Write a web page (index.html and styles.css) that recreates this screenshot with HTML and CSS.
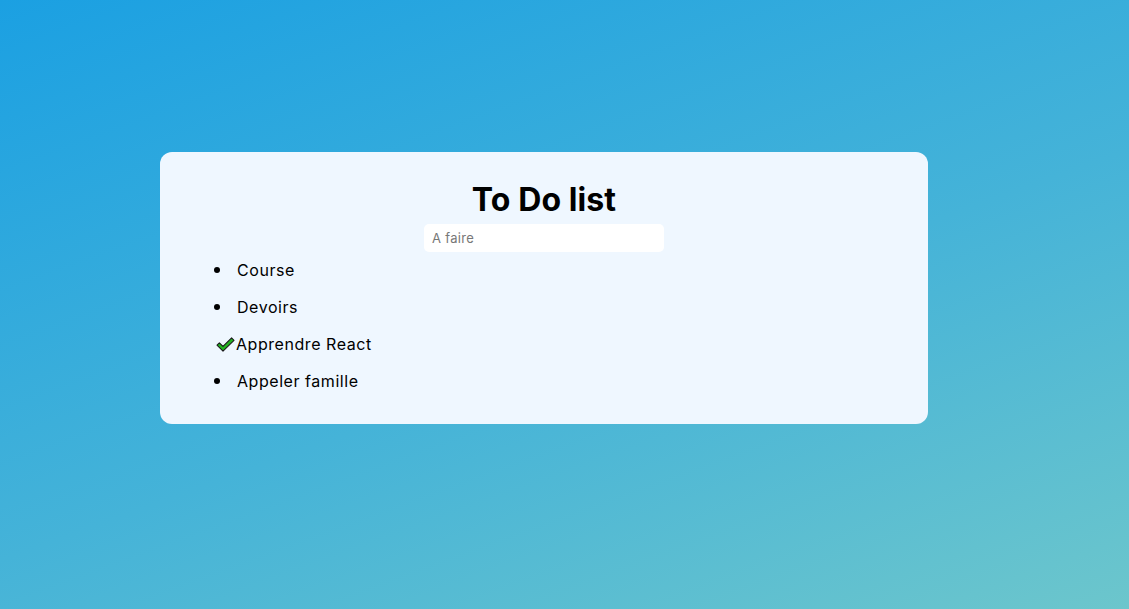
FILE: index.html
```html
<!DOCTYPE html>
<html lang="fr">
<head>
<meta charset="utf-8">
<title>To Do list</title>
<link rel="stylesheet" href="styles.css">
</head>
<body>
<main class="card">
  <h1 class="title">To Do list</h1>
  <input class="todo-input" type="text" placeholder="A faire">
  <ul class="todo-list">
    <li class="todo-item"><span class="marker"><span class="dot"></span></span><span class="label">Course</span></li>
    <li class="todo-item"><span class="marker"><span class="dot"></span></span><span class="label">Devoirs</span></li>
    <li class="todo-item done"><span class="marker"><svg class="check" width="19" height="15" viewBox="0 0 19 15"><path d="M1 8.2 L3.4 5.8 L7 9.3 L15.6 0.9 L18 3.3 L7 14.1 Z" fill="#22b322" stroke="#1a1a1a" stroke-width="1.1" stroke-linejoin="round"/></svg></span><span class="label">Apprendre React</span></li>
    <li class="todo-item"><span class="marker"><span class="dot"></span></span><span class="label">Appeler famille</span></li>
  </ul>
</main>
</body>
</html>
```
FILE: styles.css
```css
html, body {
  margin: 0;
  height: 100%;
}
body {
  background: linear-gradient(160deg, #1ba0e2 0%, #45b3d8 55%, #6cc6cc 100%);
  font-family: "Inter", "Open Sans", sans-serif;
  color: #000;
  padding: 152px 0 0 160px;
  box-sizing: border-box;
  overflow: hidden;
}
.card {
  width: 768px;
  box-sizing: border-box;
  background: #eff7ff;
  border-radius: 12px;
  padding: 24px 37px 31px;
  display: flex;
  flex-direction: column;
  align-items: center;
}
.title {
  margin: 0;
  font-size: 32px;
  font-weight: 700;
  line-height: 48px;
  letter-spacing: 0.1px;
}
.todo-input {
  width: 240px;
  height: 28px;
  box-sizing: border-box;
  border: none;
  border-radius: 5px;
  background: #fff;
  padding: 0 8px;
  font-family: inherit;
  font-size: 13px;
  letter-spacing: 0.3px;
  outline: none;
}
.todo-input::placeholder {
  color: #777;
}
.todo-list {
  align-self: stretch;
  list-style: none;
  margin: 6px 0 0;
  padding: 0 0 0 17px;
  display: flex;
  flex-direction: column;
  gap: 13px;
}
.todo-item {
  display: flex;
  align-items: center;
  font-size: 16px;
  line-height: 24px;
  letter-spacing: 0.55px;
}
.marker {
  width: 23px;
  display: flex;
  align-items: center;
}
.dot {
  width: 6px;
  height: 6px;
  border-radius: 50%;
  background: #000;
}
.check {
  margin-left: 2px;
  display: block;
}
.done .marker {
  width: 22px;
}
```
